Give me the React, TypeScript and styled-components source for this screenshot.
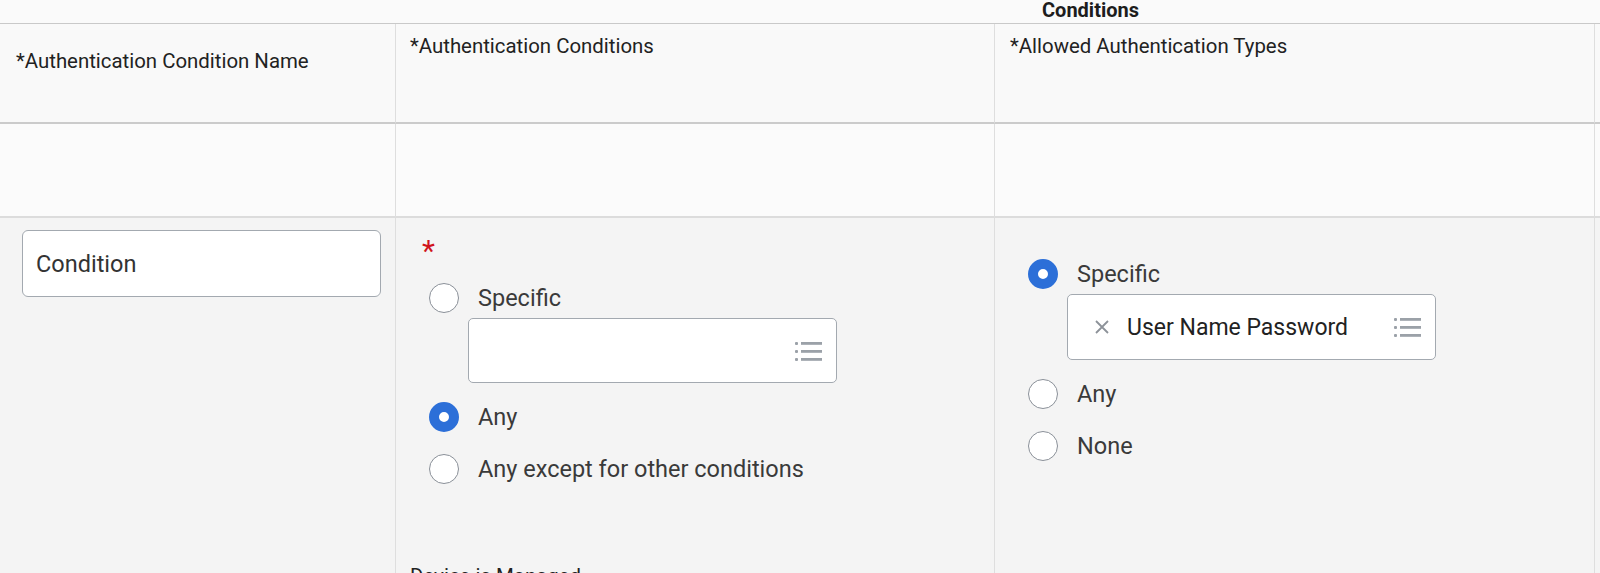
import React from "react";
import styled, { createGlobalStyle } from "styled-components";

const GlobalStyle = createGlobalStyle`
  html, body {
    margin: 0;
    padding: 0;
    background: #fafafa;
    font-family: Roboto, "Liberation Sans", Arial, sans-serif;
    color: #333;
    overflow: hidden;
  }
`;

const COLS = "7px 389px 599px 600px 1fr";

const TopBand = styled.div`
  display: grid;
  grid-template-columns: ${COLS};
  height: 23px;
  border-bottom: 1px solid #c9c9c9;
  background: #fafafa;
`;

const GroupTitle = styled.div`
  grid-column: 4;
  padding-left: 47px;
  font-size: 20px;
  font-weight: 700;
  line-height: 21px;
  color: #1d1d1d;
`;

const Table = styled.div`
  display: grid;
  grid-template-columns: ${COLS};
  grid-template-rows: 100px 94px 420px;
`;

const Cell = styled.div<{ $bg: string; $line: string; $lineW?: number }>`
  box-sizing: border-box;
  background: ${({ $bg }) => $bg};
  border-right: 1px solid #dedede;
  border-bottom: ${({ $lineW }) => $lineW ?? 2}px solid ${({ $line }) => $line};
`;

const Edge = styled(Cell)`
  border-right: none;
`;

const HeadCell = styled(Cell)<{ $top: number; $left: number }>`
  padding: ${({ $top, $left }) => `${$top}px 10px 0 ${$left}px`};
  font-size: 20.4px;
  line-height: 24px;
  color: #222;
`;

const BodyCell = styled(Cell)<{ $top: number }>`
  display: flex;
  flex-direction: column;
  align-items: flex-start;
  padding-top: ${({ $top }) => $top}px;
`;

const NameInput = styled.div`
  box-sizing: border-box;
  width: 359px;
  height: 67px;
  margin-left: 15px;
  padding-left: 13px;
  display: flex;
  align-items: center;
  background: #fff;
  border: 1px solid #a3a9b0;
  border-radius: 6px;
  font-size: 23.5px;
  color: #333;
`;

const Options = styled.div`
  display: flex;
  flex-direction: column;
  padding-left: 33px;
`;

const Required = styled.div`
  height: 43px;
  margin-left: 26px;
  font-size: 30px;
  line-height: 22px;
  color: #d0141c;
`;

const RadioRow = styled.label<{ $gap?: number }>`
  display: flex;
  align-items: center;
  gap: 19px;
  height: 30px;
  margin-top: ${({ $gap }) => $gap ?? 0}px;
  font-size: 23.5px;
  color: #3a3a3a;
`;

const Radio = styled.span<{ $checked?: boolean }>`
  box-sizing: border-box;
  flex: none;
  width: 30px;
  height: 30px;
  border-radius: 50%;
  background: #fff;
  border: ${({ $checked }) =>
    $checked ? "10px solid #2c6fd8" : "1.5px solid #8a9098"};
`;

const Picker = styled.div<{ $h: number }>`
  box-sizing: border-box;
  width: 369px;
  height: ${({ $h }) => $h}px;
  margin: 5px 0 19px 39px;
  padding: 0 13px 0 27px;
  display: flex;
  align-items: center;
  background: #fff;
  border: 1px solid #a3a9b0;
  border-radius: 5px;
`;

const Chip = styled.span`
  display: flex;
  align-items: center;
  gap: 18px;
  font-size: 23px;
  color: #222;
`;

const ListIcon = styled.svg`
  margin-left: auto;
  flex: none;
`;

const DeviceLabel = styled.div`
  margin: 80px 0 0 14px;
  font-size: 20.4px;
  line-height: 24px;
  color: #222;
`;

const List = () => (
  <ListIcon width="28" height="22" viewBox="0 0 28 22">
    <g fill="#9ba1a8">
      <rect x="0" y="2" width="3" height="3" rx="1" />
      <rect x="0" y="10" width="3" height="3" rx="1" />
      <rect x="0" y="18" width="3" height="3" rx="1" />
      <rect x="6" y="2" width="21" height="2.8" />
      <rect x="6" y="10" width="21" height="2.8" />
      <rect x="6" y="18" width="21" height="2.8" />
    </g>
  </ListIcon>
);

const Cross = () => (
  <svg width="14" height="14" viewBox="0 0 14 14">
    <path d="M1 1 L13 13 M13 1 L1 13" stroke="#8d9299" strokeWidth="1.8" />
  </svg>
);

const HEAD_BG = "#f9f9f9";
const FILTER_BG = "#fbfbfb";
const BODY_BG = "#f4f4f4";

export default function App() {
  return (
    <>
      <GlobalStyle />
      <TopBand>
        <GroupTitle>Conditions</GroupTitle>
      </TopBand>
      <Table>
        <Edge $bg={HEAD_BG} $line="#cbcbcb" />
        <HeadCell $bg={HEAD_BG} $line="#cbcbcb" $top={25} $left={9}>
          *Authentication Condition Name
        </HeadCell>
        <HeadCell $bg={HEAD_BG} $line="#cbcbcb" $top={10} $left={14}>
          *Authentication Conditions
        </HeadCell>
        <HeadCell $bg={HEAD_BG} $line="#cbcbcb" $top={10} $left={15}>
          *Allowed Authentication Types
        </HeadCell>
        <Edge $bg={HEAD_BG} $line="#cbcbcb" />

        <Edge $bg={FILTER_BG} $line="#dcdcdc" />
        <Cell $bg={FILTER_BG} $line="#dcdcdc" />
        <Cell $bg={FILTER_BG} $line="#dcdcdc" />
        <Cell $bg={FILTER_BG} $line="#dcdcdc" />
        <Edge $bg={FILTER_BG} $line="#dcdcdc" />

        <Edge $bg={BODY_BG} $line="transparent" $lineW={0} />
        <BodyCell $bg={BODY_BG} $line="transparent" $lineW={0} $top={12}>
          <NameInput>Condition</NameInput>
        </BodyCell>
        <BodyCell $bg={BODY_BG} $line="transparent" $lineW={0} $top={22}>
          <Required>*</Required>
          <Options>
            <RadioRow>
              <Radio />
              Specific
            </RadioRow>
            <Picker $h={65}>
              <List />
            </Picker>
            <RadioRow>
              <Radio $checked />
              Any
            </RadioRow>
            <RadioRow $gap={22}>
              <Radio />
              Any except for other conditions
            </RadioRow>
          </Options>
          <DeviceLabel>Device is Managed</DeviceLabel>
        </BodyCell>
        <BodyCell $bg={BODY_BG} $line="transparent" $lineW={0} $top={41}>
          <Options>
            <RadioRow>
              <Radio $checked />
              Specific
            </RadioRow>
            <Picker $h={66}>
              <Chip>
                <Cross />
                User Name Password
              </Chip>
              <List />
            </Picker>
            <RadioRow>
              <Radio />
              Any
            </RadioRow>
            <RadioRow $gap={22}>
              <Radio />
              None
            </RadioRow>
          </Options>
        </BodyCell>
        <Edge $bg={BODY_BG} $line="transparent" $lineW={0} />
      </Table>
    </>
  );
}
